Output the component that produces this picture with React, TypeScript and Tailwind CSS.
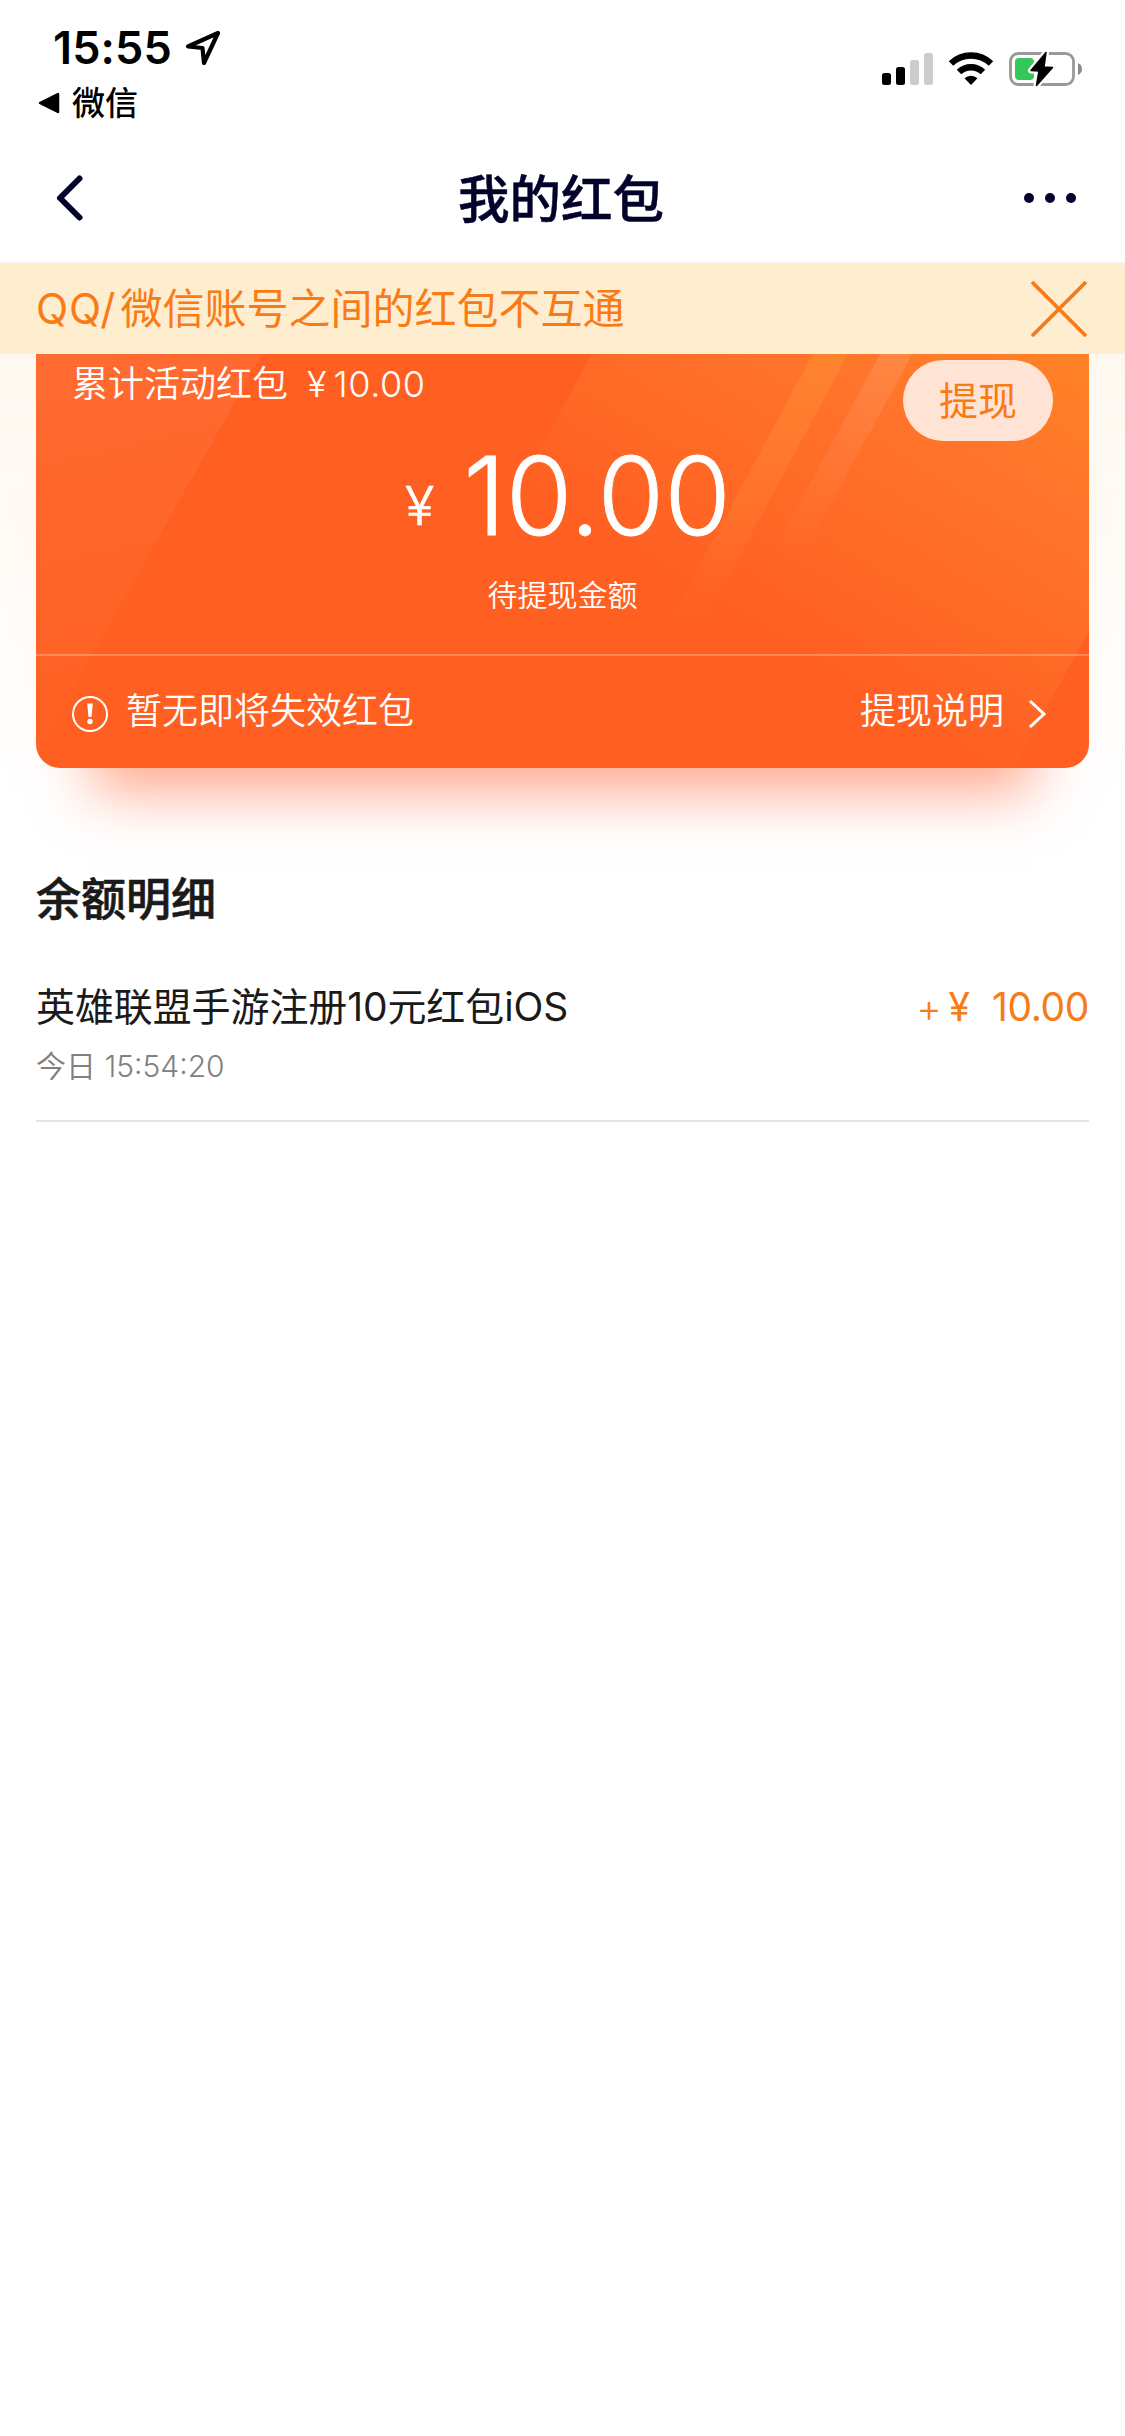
const StatusBar = () => {
  return (
    <div className="flex h-[132px] w-full justify-between pr-[41px] pl-[37px] text-black">
      <div className="flex flex-col pt-[21px]">
        <div className="flex h-[54px] items-center pl-[16px]">
          <span className="text-[45px] leading-[54px] font-[600] tracking-[0.1px]">15:55</span>
          <svg className="ml-[13px]" width="36" height="36" viewBox="0 0 36 36" fill="none">
            <path d="M33 3 L3 16.5 L17.5 18 L19 33 Z" stroke="#000" strokeWidth="4.2" strokeLinejoin="round" />
          </svg>
        </div>
        <div className="flex h-[56px] items-center">
          <svg width="24" height="24" viewBox="0 0 24 24">
            <path d="M3 12 L21 3 V21 Z" fill="#000" stroke="#000" strokeWidth="2.5" strokeLinejoin="round" />
          </svg>
          <span className="ml-[11px] text-[33px] leading-[48px] font-[500]">微信</span>
        </div>
      </div>
      <div className="flex items-start pt-[50px]">
        <svg width="202" height="38" viewBox="0 0 202 38">
          <rect x="0" y="23" width="9" height="12" rx="2.5" />
          <rect x="14" y="17" width="9" height="18" rx="2.5" />
          <rect x="28" y="10" width="9" height="25" rx="2.5" fill="#ccc" />
          <rect x="42" y="3" width="9" height="32" rx="2.5" fill="#ccc" />
          <path d="M69 13.5 A29 29 0 0 1 109 13.5" fill="none" stroke="#000" strokeWidth="6.5" />
          <path d="M77 22 A17.5 17.5 0 0 1 101 22" fill="none" stroke="#000" strokeWidth="6.5" />
          <path d="M89 35 L82.5 28.3 A9.5 9.5 0 0 1 95.5 28.3 Z" />
          <rect x="128.5" y="3.5" width="63" height="31" rx="8" fill="none" stroke="#999" strokeWidth="2.8" />
          <rect x="133" y="8" width="19" height="22" rx="4" fill="#34c759" />
          <path d="M196 13 Q200 15 200 19 Q200 23 196 25 Z" fill="#8a8a8a" />
          <path
            d="M164 2.5 L149 20.5 L157 21 L154.5 35.5 L170.5 17.5 L162 17 Z"
            stroke="#fff"
            strokeWidth="6"
            strokeLinejoin="round"
          />
          <path
            d="M164 2.5 L149 20.5 L157 21 L154.5 35.5 L170.5 17.5 L162 17 Z"
            stroke="#000"
            strokeWidth="1.5"
            strokeLinejoin="round"
          />
        </svg>
      </div>
    </div>
  );
};

const NavBar = () => {
  return (
    <div className="flex h-[131px] w-full items-center justify-between border-b border-[#f4f4f4] pt-[2px] pr-[49px] pl-[53px] text-[#03022b]">
      <svg width="32" height="50" viewBox="0 0 32 50" fill="none">
        <path d="M26.5 5.5 L7 25 L26.5 44.5" stroke="#03022b" strokeWidth="6" strokeLinecap="round" strokeLinejoin="round" />
      </svg>
      <h1 className="pt-[2px] pl-[13px] text-[51.5px] leading-[72px] font-[500] [-webkit-text-stroke:0.5px]">我的红包</h1>
      <div className="flex gap-[11px]">
        <i className="h-[10px] w-[10px] rounded-full bg-[#03022b]" />
        <i className="h-[10px] w-[10px] rounded-full bg-[#03022b]" />
        <i className="h-[10px] w-[10px] rounded-full bg-[#03022b]" />
      </div>
    </div>
  );
};

const Notice = () => {
  return (
    <div className="flex h-[91px] w-full items-center justify-between bg-[#ffedcf] pr-[37px] pl-[36px] text-[#f97b16]">
      <p className="flex pt-[1px] text-[42px] leading-[60px]">
        <span className="mr-[4px] tracking-[0.9px]">QQ/</span>
        微信账号之间的红包不互通
      </p>
      <svg width="58" height="58" viewBox="0 0 58 58">
        <path d="M2 2 L56 56 M56 2 L2 56" stroke="#f97b16" strokeWidth="3.8" />
      </svg>
    </div>
  );
};

// diagonal light bands behind the balance
const CardPattern = () => {
  return (
    <svg className="absolute inset-0" width="1053" height="414" viewBox="36 354 1053 414">
      <defs>
        <linearGradient id="glow" gradientUnits="userSpaceOnUse" x1="1089" y1="354" x2="880" y2="700">
          <stop offset="0" stopColor="#ff8326" />
          <stop offset="0.35" stopColor="#ff752b" />
          <stop offset="1" stopColor="#ff6022" />
        </linearGradient>
        <linearGradient id="left" gradientUnits="userSpaceOnUse" x1="60" y1="354" x2="150" y2="740">
          <stop offset="0" stopColor="#fff" stopOpacity="0.07" />
          <stop offset="1" stopColor="#fff" stopOpacity="0" />
        </linearGradient>
        <linearGradient id="amber" x1="0" y1="0" x2="0" y2="1">
          <stop offset="0" stopColor="#ff8c30" stopOpacity="0.6" />
          <stop offset="1" stopColor="#ff8c40" stopOpacity="0" />
        </linearGradient>
        <linearGradient id="pink" x1="0" y1="0" x2="0" y2="1">
          <stop offset="0" stopColor="#fff" stopOpacity="0.11" />
          <stop offset="1" stopColor="#fff" stopOpacity="0" />
        </linearGradient>
      </defs>
      <rect x="36" y="354" width="1053" height="414" fill="#ff6022" />
      <path d="M592 354 H1089 V631 L1013 768 H365 Z" fill="url(#glow)" />
      <path d="M36 354 H262 L36 754 Z" fill="url(#left)" />
      <path d="M813 354 H848 L705 620 H670 Z" fill="url(#amber)" />
      <path d="M880 354 H912 L801 560 H769 Z" fill="url(#pink)" />
    </svg>
  );
};

const BalanceCard = () => {
  return (
    <div className="w-full bg-linear-to-b from-[#fff8f0] to-white to-[440px] px-[36px]">
      <div className="relative h-[414px] w-full rounded-b-[24px] text-white shadow-[0_78px_56px_-56px_rgba(255,90,34,0.55)]">
        <div className="absolute inset-0 overflow-hidden rounded-b-[24px]">
          <CardPattern />
        </div>
        <div className="relative flex h-full flex-col">
          <div className="flex h-[88px] justify-between pt-[6px] pr-[36px] pl-[36px]">
            <p className="flex text-[36px] leading-[48px] font-[350]">
              累计活动红包<span className="ml-[19px] font-[300]">¥</span>
              <span className="ml-[7px] tracking-[0.6px]">10.00</span>
            </p>
            <button className="h-[81px] w-[150px] rounded-full bg-[#ffe4d6] text-[39px] leading-[78px] text-[#f97b16]">
              提现
            </button>
          </div>
          <div className="flex h-[110px] justify-center pl-[11px]">
            <span className="pt-[9px] text-[54px] leading-[110px] font-[300] [-webkit-text-stroke:0.6px]">¥</span>
            <span className="ml-[29px] text-[108px] leading-[108px] font-[300] [-webkit-text-stroke:0.8px]">10.00</span>
          </div>
          <p className="mt-[19px] text-center text-[30px] leading-[48px] font-[350]">待提现金额</p>
          <div className="mt-auto flex h-[114px] items-center justify-between border-t-2 border-white/25 pr-[41px] pl-[36px] text-[36px] font-[350]">
            <div className="flex items-center">
              <svg className="mt-[3px]" width="36" height="36" viewBox="0 0 36 36">
                <circle cx="18" cy="18" r="17" fill="none" stroke="#fff" strokeWidth="2" />
                <path d="M15.2 7.5 H20.8 L19.5 21 H16.5 Z" fill="#fff" />
                <circle cx="18" cy="25.5" r="2.7" fill="#fff" />
              </svg>
              <span className="ml-[18px] pb-[2px] leading-[54px]">暂无即将失效红包</span>
            </div>
            <div className="flex items-center">
              <span className="pb-[2px] leading-[54px]">提现说明</span>
              <svg className="mt-[3px] ml-[24px]" width="20" height="30" viewBox="0 0 20 30" fill="none">
                <path d="M2 2 L16 15 L2 28" stroke="#fff" strokeWidth="3" />
              </svg>
            </div>
          </div>
        </div>
      </div>
    </div>
  );
};

const BalanceList = () => {
  return (
    <div className="flex w-full flex-col px-[36px] pt-[100px] text-[#1a1a1a]">
      <h2 className="text-[45px] leading-[64px] font-[500] [-webkit-text-stroke:0.6px]">余额明细</h2>
      <div className="mt-[46px] flex h-[144px] flex-col border-b-2 border-[#e6e6e6]">
        <div className="flex items-center justify-between text-[39px] leading-[56px]">
          <span className="tracking-[-0.1px]">英雄联盟手游注册10元红包iOS</span>
          <span className="flex pt-[1px] text-[#f97b16]">
            <span className="pt-[1px] font-[300]">+</span>
            <span className="ml-[7px]">¥</span>
            <span className="ml-[22px] tracking-[-0.4px]">10.00</span>
          </span>
        </div>
        <span className="mt-[6px] text-[30px] leading-[48px] font-[350] text-[#808080]">今日 15:54:20</span>
      </div>
    </div>
  );
};

const App = () => {
  return (
    <div className="flex min-h-[2436px] w-[1125px] flex-col bg-white font-['Inter','Noto_Sans_CJK_SC',sans-serif]">
      <StatusBar />
      <NavBar />
      <Notice />
      <BalanceCard />
      <BalanceList />
    </div>
  );
};
export default App
